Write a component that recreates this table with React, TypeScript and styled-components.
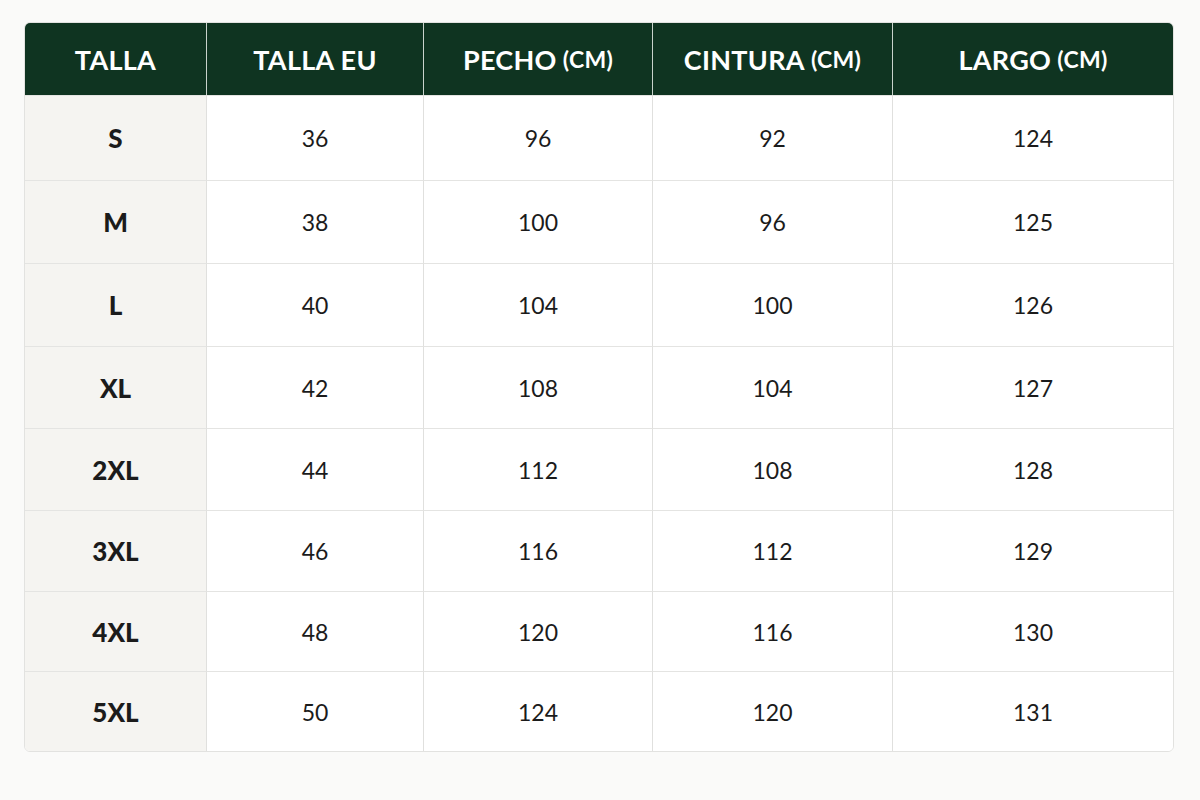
import React from "react";
import styled, { createGlobalStyle } from "styled-components";

const Global = createGlobalStyle`
  html, body { margin: 0; padding: 0; background: #fafaf9; }
  body { font-family: "Lato", "Open Sans", sans-serif; }
`;

const Page = styled.div`
  width: 1200px;
  height: 800px;
  padding: 22px 26px 0 24px;
  box-sizing: border-box;
`;

const Table = styled.div`
  display: grid;
  grid-template-columns: 181px 217px 229px 240px 1fr;
  grid-template-rows: 72px 85px 83px 83px 82px 82px 81px 80px 80px;
  border: 1px solid #e2e2e0;
  border-radius: 6px;
  overflow: hidden;
  background: #ffffff;
`;

const HeadCell = styled.div<{ $first?: boolean }>`
  background: #0f3421;
  color: #ffffff;
  display: flex;
  align-items: center;
  justify-content: center;
  font-family: "Lato", "Open Sans", sans-serif;
  font-weight: 700;
  font-size: 27px;
  letter-spacing: 0.3px;
  border-left: ${(p) => (p.$first ? "none" : "1.5px solid #c9d3cc")};
  box-sizing: border-box;
`;

const Unit = styled.span`
  font-size: 23px;
  margin-left: 6px;
`;

const Cell = styled.div<{ $first?: boolean }>`
  display: flex;
  align-items: center;
  justify-content: center;
  box-sizing: border-box;
  background: ${(p) => (p.$first ? "#f5f4f1" : "#ffffff")};
  border-left: ${(p) => (p.$first ? "none" : "1px solid #e0e0de")};
  border-top: 1px solid #e4e4e2;
  color: #1b1b1b;
  font-family: "Lato", "Open Sans", sans-serif;
  font-weight: ${(p) => (p.$first ? 900 : 400)};
  font-size: ${(p) => (p.$first ? "26px" : "23px")};
`;

const headers: [string, string | null][] = [
  ["TALLA", null],
  ["TALLA EU", null],
  ["PECHO", "(CM)"],
  ["CINTURA", "(CM)"],
  ["LARGO", "(CM)"],
];

const rows = [
  ["S", "36", "96", "92", "124"],
  ["M", "38", "100", "96", "125"],
  ["L", "40", "104", "100", "126"],
  ["XL", "42", "108", "104", "127"],
  ["2XL", "44", "112", "108", "128"],
  ["3XL", "46", "116", "112", "129"],
  ["4XL", "48", "120", "116", "130"],
  ["5XL", "50", "124", "120", "131"],
];

export default function App() {
  return (
    <Page>
      <Global />
      <Table>
        {headers.map(([h, u], i) => (
          <HeadCell key={h} $first={i === 0}>
            {h}
            {u && <Unit>{u}</Unit>}
          </HeadCell>
        ))}
        {rows.map((r, ri) =>
          r.map((v, ci) => (
            <Cell key={`${ri}-${ci}`} $first={ci === 0}>
              {v}
            </Cell>
          ))
        )}
      </Table>
    </Page>
  );
}
